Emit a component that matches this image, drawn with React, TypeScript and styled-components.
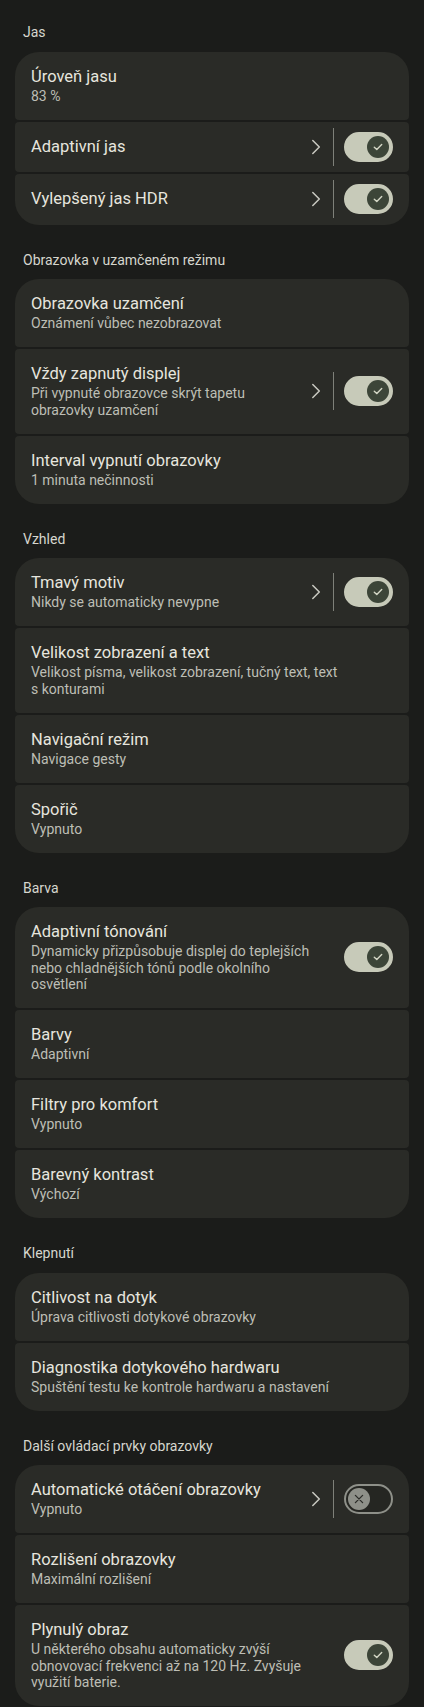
import React from "react";
import styled, { createGlobalStyle } from "styled-components";

const GlobalStyle = createGlobalStyle`
  html, body {
    margin: 0;
    padding: 0;
    background: #1b1c1a;
  }
  body {
    font-family: Roboto, "Noto Sans", "Liberation Sans", sans-serif;
    -webkit-font-smoothing: antialiased;
  }
  * { box-sizing: border-box; }
`;

type Toggle = "on" | "off";

interface Item {
  title: string;
  subtitle?: string;
  chevron?: boolean;
  toggle?: Toggle;
}

interface Group {
  title: string;
  items: Item[];
}

const groups: Group[] = [
  {
    title: "Jas",
    items: [
      { title: "Úroveň jasu", subtitle: "83 %" },
      { title: "Adaptivní jas", chevron: true, toggle: "on" },
      { title: "Vylepšený jas HDR", chevron: true, toggle: "on" },
    ],
  },
  {
    title: "Obrazovka v uzamčeném režimu",
    items: [
      { title: "Obrazovka uzamčení", subtitle: "Oznámení vůbec nezobrazovat" },
      {
        title: "Vždy zapnutý displej",
        subtitle: "Při vypnuté obrazovce skrýt tapetu obrazovky uzamčení",
        chevron: true,
        toggle: "on",
      },
      { title: "Interval vypnutí obrazovky", subtitle: "1 minuta nečinnosti" },
    ],
  },
  {
    title: "Vzhled",
    items: [
      {
        title: "Tmavý motiv",
        subtitle: "Nikdy se automaticky nevypne",
        chevron: true,
        toggle: "on",
      },
      {
        title: "Velikost zobrazení a text",
        subtitle: "Velikost písma, velikost zobrazení, tučný text, text s\u00a0konturami",
      },
      { title: "Navigační režim", subtitle: "Navigace gesty" },
      { title: "Spořič", subtitle: "Vypnuto" },
    ],
  },
  {
    title: "Barva",
    items: [
      {
        title: "Adaptivní tónování",
        subtitle:
          "Dynamicky přizpůsobuje displej do teplejších nebo chladnějších tónů podle okolního osvětlení",
        toggle: "on",
      },
      { title: "Barvy", subtitle: "Adaptivní" },
      { title: "Filtry pro komfort", subtitle: "Vypnuto" },
      { title: "Barevný kontrast", subtitle: "Výchozí" },
    ],
  },
  {
    title: "Klepnutí",
    items: [
      { title: "Citlivost na dotyk", subtitle: "Úprava citlivosti dotykové obrazovky" },
      {
        title: "Diagnostika dotykového hardwaru",
        subtitle: "Spuštění testu ke kontrole hardwaru a nastavení",
      },
    ],
  },
  {
    title: "Další ovládací prvky obrazovky",
    items: [
      {
        title: "Automatické otáčení obrazovky",
        subtitle: "Vypnuto",
        chevron: true,
        toggle: "off",
      },
      { title: "Rozlišení obrazovky", subtitle: "Maximální rozlišení" },
      {
        title: "Plynulý obraz",
        subtitle:
          "U některého obsahu automaticky zvýší obnovovací frekvenci až na 120 Hz. Zvyšuje využití baterie.",
        toggle: "on",
      },
    ],
  },
];

const Page = styled.main`
  padding: 22px 15px 2px;
  background: #1b1c1a;
`;

const Section = styled.section`
  & + & {
    margin-top: 25px;
  }
`;

const SectionTitle = styled.h2`
  margin: 0 0 9.5px;
  padding: 0 8px;
  font-size: 14px;
  line-height: 20px;
  font-weight: 400;
  color: #d6d6ce;
`;

const Card = styled.div`
  display: flex;
  flex-direction: column;
  gap: 2px;
`;

const Row = styled.div`
  display: flex;
  align-items: center;
  padding: 15px 16px 15.5px 16px;
  background: #2a2b27;
  border-radius: 4px;

  &:first-child {
    border-top-left-radius: 24px;
    border-top-right-radius: 24px;
  }
  &:last-child {
    border-bottom-left-radius: 24px;
    border-bottom-right-radius: 24px;
  }
`;

const TextBlock = styled.div`
  flex: 1;
  min-width: 0;
  padding-right: 16px;
`;

const Title = styled.div`
  font-size: 16.5px;
  line-height: 20px;
  color: #e6e5de;
`;

const Subtitle = styled.div`
  margin-top: 1px;
  font-size: 14px;
  line-height: 16.5px;
  color: #bdbeb5;
`;

const Trailing = styled.div`
  display: flex;
  align-items: center;
  flex-shrink: 0;
  height: 20px;
`;

const Chevron = styled.svg`
  display: block;
  width: 10px;
  height: 16px;
  margin-right: 12px;
`;

const Divider = styled.span`
  display: block;
  width: 1px;
  height: 38px;
  margin-right: 10px;
  background: #7e8079;
`;

const Track = styled.span<{ $on: boolean }>`
  display: flex;
  align-items: center;
  justify-content: ${(p) => (p.$on ? "flex-end" : "flex-start")};
  width: 49px;
  height: 30px;
  padding: 0 2px;
  border-radius: 15px;
  background: ${(p) => (p.$on ? "#c7cab9" : "#252622")};
  border: 2px solid ${(p) => (p.$on ? "#c7cab9" : "#8e9089")};
`;

const Thumb = styled.span<{ $on: boolean }>`
  display: flex;
  align-items: center;
  justify-content: center;
  width: 22px;
  height: 22px;
  border-radius: 50%;
  background: ${(p) => (p.$on ? "#3c4538" : "#8e9089")};
`;

function Switch({ state }: { state: Toggle }) {
  const on = state === "on";
  return (
    <Track $on={on}>
      <Thumb $on={on}>
        {on ? (
          <svg width="12" height="12" viewBox="0 0 12 12">
            <path
              d="M2.3 6.2 L4.8 8.6 L9.7 3.6"
              fill="none"
              stroke="#d4d7c6"
              strokeWidth="1.4"
              strokeLinecap="round"
              strokeLinejoin="round"
            />
          </svg>
        ) : (
          <svg width="12" height="12" viewBox="0 0 12 12">
            <path
              d="M2.4 2.4 L9.6 9.6 M9.6 2.4 L2.4 9.6"
              fill="none"
              stroke="#2a2b27"
              strokeWidth="1.3"
              strokeLinecap="round"
            />
          </svg>
        )}
      </Thumb>
    </Track>
  );
}

function SettingRow({ item }: { item: Item }) {
  return (
    <Row>
      <TextBlock>
        <Title>{item.title}</Title>
        {item.subtitle && <Subtitle>{item.subtitle}</Subtitle>}
      </TextBlock>
      {(item.chevron || item.toggle) && (
        <Trailing>
          {item.chevron && (
            <>
              <Chevron viewBox="0 0 10 16">
                <path
                  d="M1.8 1.5 L8.3 8 L1.8 14.5"
                  fill="none"
                  stroke="#c9c9c1"
                  strokeWidth="1.5"
                  strokeLinecap="round"
                  strokeLinejoin="round"
                />
              </Chevron>
              <Divider />
            </>
          )}
          {item.toggle && <Switch state={item.toggle} />}
        </Trailing>
      )}
    </Row>
  );
}

export default function App() {
  return (
    <>
      <GlobalStyle />
      <Page>
        {groups.map((g) => (
          <Section key={g.title}>
            <SectionTitle>{g.title}</SectionTitle>
            <Card>
              {g.items.map((it) => (
                <SettingRow key={it.title} item={it} />
              ))}
            </Card>
          </Section>
        ))}
      </Page>
    </>
  );
}
